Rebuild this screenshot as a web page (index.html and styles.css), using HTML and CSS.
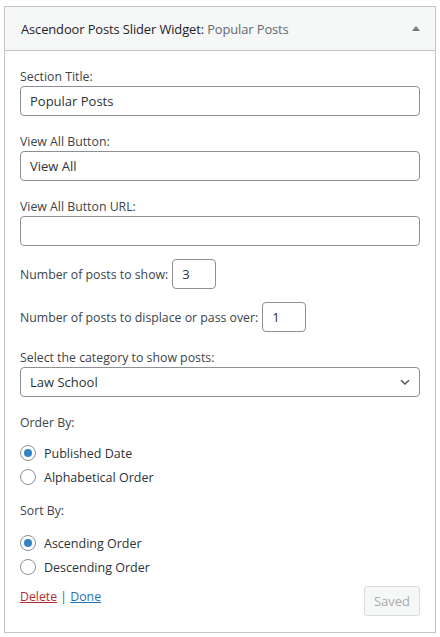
FILE: index.html
```
<!DOCTYPE html>
<html>
<head>
<meta charset="utf-8">
<link rel="stylesheet" href="styles.css">
</head>
<body>
<div class="widget">
  <div class="widget-top">
    <h3 class="widget-title">Ascendoor Posts Slider Widget:<span class="in-title"> Popular Posts</span></h3>
    <span class="toggle"></span>
  </div>
  <div class="widget-inside">
    <div class="field">
      <label class="lbl">Section Title:</label>
      <div class="input">Popular Posts</div>
    </div>
    <div class="field">
      <label class="lbl">View All Button:</label>
      <div class="input">View All</div>
    </div>
    <div class="field url">
      <label class="lbl">View All Button URL:</label>
      <div class="input"></div>
    </div>
    <div class="inline-field">
      <label class="lbl-inline">Number of posts to show:</label>
      <div class="input small">3</div>
    </div>
    <div class="inline-field second">
      <label class="lbl-inline">Number of posts to displace or pass over:</label>
      <div class="input small">1</div>
    </div>
    <div class="field sel-field">
      <label class="lbl">Select the category to show posts:</label>
      <div class="input select">Law School
        <svg class="chev" width="14" height="14" viewBox="0 0 14 14"><path d="M3 5.2 L7 9 L11 5.2" fill="none" stroke="#50575e" stroke-width="1.5"/></svg>
      </div>
    </div>
    <div class="group order">
      <div class="group-title">Order By:</div>
      <div class="radio"><span class="dot checked"></span>Published Date</div>
      <div class="radio"><span class="dot"></span>Alphabetical Order</div>
    </div>
    <div class="group sort">
      <div class="group-title">Sort By:</div>
      <div class="radio"><span class="dot checked"></span>Ascending Order</div>
      <div class="radio"><span class="dot"></span>Descending Order</div>
    </div>
    <div class="actions">
      <div class="links"><a class="del">Delete</a> | <a class="done">Done</a></div>
      <div class="saved">Saved</div>
    </div>
  </div>
</div>
</body>
</html>
```
FILE: styles.css
```
html, body { margin: 0; padding: 0; background: #fff; }
body { font-family: "Open Sans", "Noto Sans", sans-serif; font-size: 12.3px; color: #3c434a; }
.widget {
  margin: 6px 0 0 4px;
  width: 432px;
  box-sizing: border-box;
  border: 1px solid #c3c4c7;
  background: #fff;
}
.widget-top {
  height: 43px;
  background: #f6f7f7;
  border-bottom: 1px solid #c3c4c7;
  display: flex;
  align-items: center;
  justify-content: space-between;
  padding: 0 16px;
}
.widget-title {
  margin: 0;
  font-size: 12.9px;
  font-weight: 400;
  color: #1d2327;
  letter-spacing: -0.1px;
}
.in-title { color: #646970; }
.toggle {
  width: 0; height: 0;
  border-left: 4px solid transparent;
  border-right: 4px solid transparent;
  border-bottom: 5px solid #787c82;
  margin-right: -1px;
}
.widget-inside { padding: 17px 15px 16px; }
.field { margin-bottom: 17px; }
.field.url { margin-bottom: 13px; }
.lbl { display: block; line-height: 18px; }
.input {
  box-sizing: border-box;
  height: 30px;
  border: 1px solid #8c8f94;
  border-radius: 4px;
  font-size: 13px;
  color: #2c3338;
  padding: 0 9px;
  display: flex;
  align-items: center;
}
.inline-field { display: flex; align-items: center; gap: 4px; margin-bottom: 13px; }
.inline-field.second { margin-bottom: 17px; }
.input.small { width: 44px; }
.sel-field { margin-bottom: 17px; }
.select { justify-content: space-between; padding-right: 7px; }
.group-title { line-height: 18px; }
.group.order { margin-bottom: 13px; }
.group.order .group-title { margin-bottom: 9px; }
.group.sort .group-title { margin-bottom: 11px; }
.radio { display: flex; align-items: center; height: 24px; font-size: 12.5px; color: #2c3338; }
.dot {
  width: 16px; height: 16px; box-sizing: border-box;
  border: 1px solid #8c8f94; border-radius: 50%;
  margin: 0 8px 0 0;
  display: flex; align-items: center; justify-content: center;
}
.dot.checked::before {
  content: ""; width: 8px; height: 8px; border-radius: 50%; background: #3582c4;
}
.actions { display: flex; justify-content: space-between; align-items: flex-start; margin-top: 7px; }
.links { padding-top: 2px; line-height: 18px; color: #50575e; }
.del { color: #b32d2e; text-decoration: underline; }
.done { color: #2271b1; text-decoration: underline; }
.saved {
  box-sizing: border-box;
  width: 56px; height: 30px;
  border: 1px solid #dcdcde; border-radius: 3px;
  background: #f6f7f7; color: #a7aaad;
  font-size: 13px;
  display: flex; align-items: center; justify-content: center;
}
```
